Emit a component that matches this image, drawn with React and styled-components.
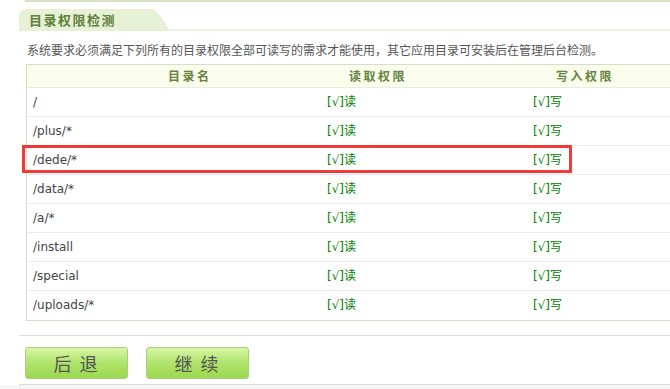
import React from 'react'
import styled, { createGlobalStyle } from 'styled-components'

const GlobalStyle = createGlobalStyle`
  html, body {
    margin: 0;
    padding: 0;
    overflow: hidden;
    background: #ffffff;
  }
  body {
    font-family: "DejaVu Sans", Verdana, "Noto Sans CJK SC", sans-serif;
    font-size: 12px;
    color: #444444;
  }
`

const rows = ['/', '/plus/*', '/dede/*', '/data/*', '/a/*', '/install', '/special', '/uploads/*']

export default function App() {
  return (
    <Page>
      <GlobalStyle />
      <TopRule />
      <Section>
        <TitleBar>
          <Tab>目录权限检测</Tab>
        </TitleBar>
        <Desc>系统要求必须满足下列所有的目录权限全部可读写的需求才能使用，其它应用目录可安装后在管理后台检测。</Desc>
        <TableWrap>
          <Table>
            <HeadRow>
              <HeadCell $pad={141}>目录名</HeadCell>
              <HeadCell $pad={28}>读取权限</HeadCell>
              <HeadCell $pad={29}>写入权限</HeadCell>
            </HeadRow>
            {rows.map((dir, i) => (
              <Row key={dir} $last={i === rows.length - 1}>
                <Cell>{dir}</Cell>
                <Cell><Ok>[√]读</Ok></Cell>
                <Cell><Ok>[√]写</Ok></Cell>
              </Row>
            ))}
          </Table>
          <Highlight />
        </TableWrap>
      </Section>
      <Footer>
        <Button>后 退</Button>
        <Button>继 续</Button>
      </Footer>
      <BottomArea />
    </Page>
  )
}

const Page = styled.div`
  width: 670px;
  height: 389px;
  overflow: hidden;
`

const TopRule = styled.div`
  margin-left: 25px;
  height: 2px;
  background: #d5e2c7;
`

const Section = styled.div`
  padding-left: 19px;
`

const TitleBar = styled.div`
  margin-top: 7px;
  height: 20px;
  border-bottom: 2px solid #e8f2dc;
  display: flex;
  align-items: flex-end;
`

const Tab = styled.div`
  position: relative;
  height: 22px;
  margin-bottom: -2px;
  padding: 0 36px 0 10px;
  background: #e6f1d6;
  border-top-left-radius: 8px;
  color: #5f7f3a;
  font-family: "Noto Sans CJK SC", sans-serif;
  font-size: 13px;
  font-weight: bold;
  letter-spacing: 1.5px;
  line-height: 22px;

  &::after {
    content: '';
    position: absolute;
    right: -18px;
    top: 0;
    width: 18px;
    height: 22px;
    background: #e6f1d6;
    clip-path: polygon(0 0, 10% 0, 55% 40%, 100% 100%, 0 100%);
  }
`

const Desc = styled.div`
  margin: 10px 0 5px 8px;
  line-height: 18px;
  font-family: "Noto Sans CJK SC", sans-serif;
  font-size: 12px;
  color: #555555;
  white-space: nowrap;
`

const TableWrap = styled.div`
  position: relative;
  margin-left: 7px;
  width: 726px;
`

const Table = styled.div`
  border: 1px solid #d3dfc6;
`

const grid = `
  display: grid;
  grid-template-columns: 294px 206px 1fr;
`

const HeadRow = styled.div`
  ${grid}
  height: 22px;
  background: #fafcec;
  border-bottom: 1px solid #e6efd9;
`

const HeadCell = styled.div`
  padding-left: ${p => p.$pad}px;
  line-height: 22px;
  font-family: "Noto Sans CJK SC", sans-serif;
  font-size: 12px;
  font-weight: bold;
  letter-spacing: 2.5px;
  color: #648440;
`

const Row = styled.div`
  ${grid}
  height: 28px;
  border-bottom: 1px solid ${p => (p.$last ? 'transparent' : '#ececec')};
`

const Cell = styled.div`
  padding-left: 6px;
  line-height: 28px;
  white-space: nowrap;
`

const Ok = styled.span`
  color: #008000;
  font-family: "DejaVu Sans", "Noto Sans CJK SC", sans-serif;
`

const Highlight = styled.div`
  position: absolute;
  left: -4px;
  top: 81px;
  width: 544px;
  height: 22px;
  border: 3px solid #f03a3a;
  pointer-events: none;
`

const Footer = styled.div`
  margin-top: 14px;
  margin-left: 19px;
  border-top: 1px solid #dddddd;
  border-bottom: 1px solid #dddddd;
  padding: 11px 0 5px 6px;
  display: flex;
  gap: 18px;
`

const Button = styled.div`
  width: 101px;
  height: 30px;
  border: 1px solid #a9d07f;
  border-radius: 3px;
  background: linear-gradient(#d8f6a4, #b0e36c 50%, #9ad84f);
  color: #555555;
  font-family: "Noto Sans CJK SC", sans-serif;
  font-size: 18px;
  line-height: 30px;
  text-align: center;
  letter-spacing: 2px;
`

const BottomArea = styled.div`
  height: 10px;
  background: #f5f5f5;
`
